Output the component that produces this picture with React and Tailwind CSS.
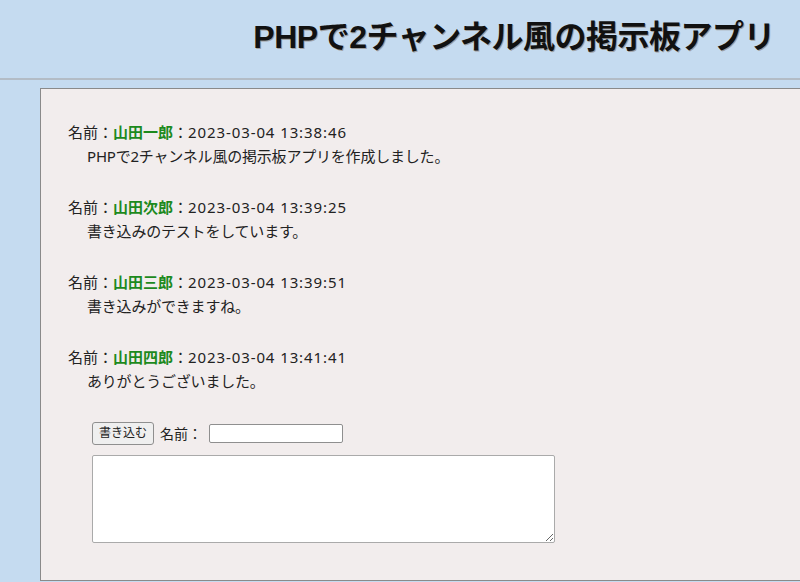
import React from "react";

const posts = [
  { name: "山田一郎", date: "2023-03-04 13:38:46", body: "PHPで2チャンネル風の掲示板アプリを作成しました。" },
  { name: "山田次郎", date: "2023-03-04 13:39:25", body: "書き込みのテストをしています。" },
  { name: "山田三郎", date: "2023-03-04 13:39:51", body: "書き込みができますね。" },
  { name: "山田四郎", date: "2023-03-04 13:41:41", body: "ありがとうございました。" },
];

const App = () => {
  return (
    <div
      className="w-full h-[582px] overflow-hidden bg-[#c5dbf0] text-[#222]"
      style={{ fontFamily: '"Noto Sans", "Noto Sans CJK JP", sans-serif' }}
    >
      <header className="h-[80px] border-b-2 border-[#b3bcc6] flex justify-end items-center pr-[25px]">
        <h1
          className="text-[32px] font-bold text-[#111] tracking-[-0.5px] [text-shadow:1px_1px_0_#a0a0a0] pb-[4px]"
          style={{ fontFamily: '"Liberation Sans", "Noto Sans CJK JP", sans-serif' }}
        >
          PHPで2チャンネル風の掲示板アプリ
        </h1>
      </header>
      <main className="ml-[40px] mt-[8px] w-[800px] h-[493px] bg-[#f2eded] border border-[#8a8a8a] pt-[31px] pl-[27px]">
        <div className="flex flex-col gap-[27px]">
          {posts.map((p, i) => (
            <div key={i} className="text-[15px] leading-[24px]">
              <div>
                名前：<span className="text-[#1d8a1d] font-bold">{p.name}</span>：
                <span className="tracking-[0.9px]">{p.date}</span>
              </div>
              <div className="pl-[19px] tracking-[-0.2px]">{p.body}</div>
            </div>
          ))}
        </div>
        <form className="mt-[28px] ml-[24px]" onSubmit={(e) => e.preventDefault()}>
          <div className="flex items-center gap-[6px] h-[24px]">
            <button
              type="submit"
              className="h-[23px] px-[6px] text-[12px] border border-[#8f8f8f] rounded-[3px] bg-[#efefef] text-[#222]"
            >
              書き込む
            </button>
            <span className="text-[14px]">名前：</span>
            <input
              type="text"
              className="w-[134px] h-[19px] border border-[#8f8f8f] rounded-[2px] bg-white ml-[1px]"
            />
          </div>
          <textarea className="mt-[10px] block w-[463px] h-[88px] bg-white border border-[#aaa] rounded-[2px]" />
        </form>
      </main>
    </div>
  );
};

export default App;
